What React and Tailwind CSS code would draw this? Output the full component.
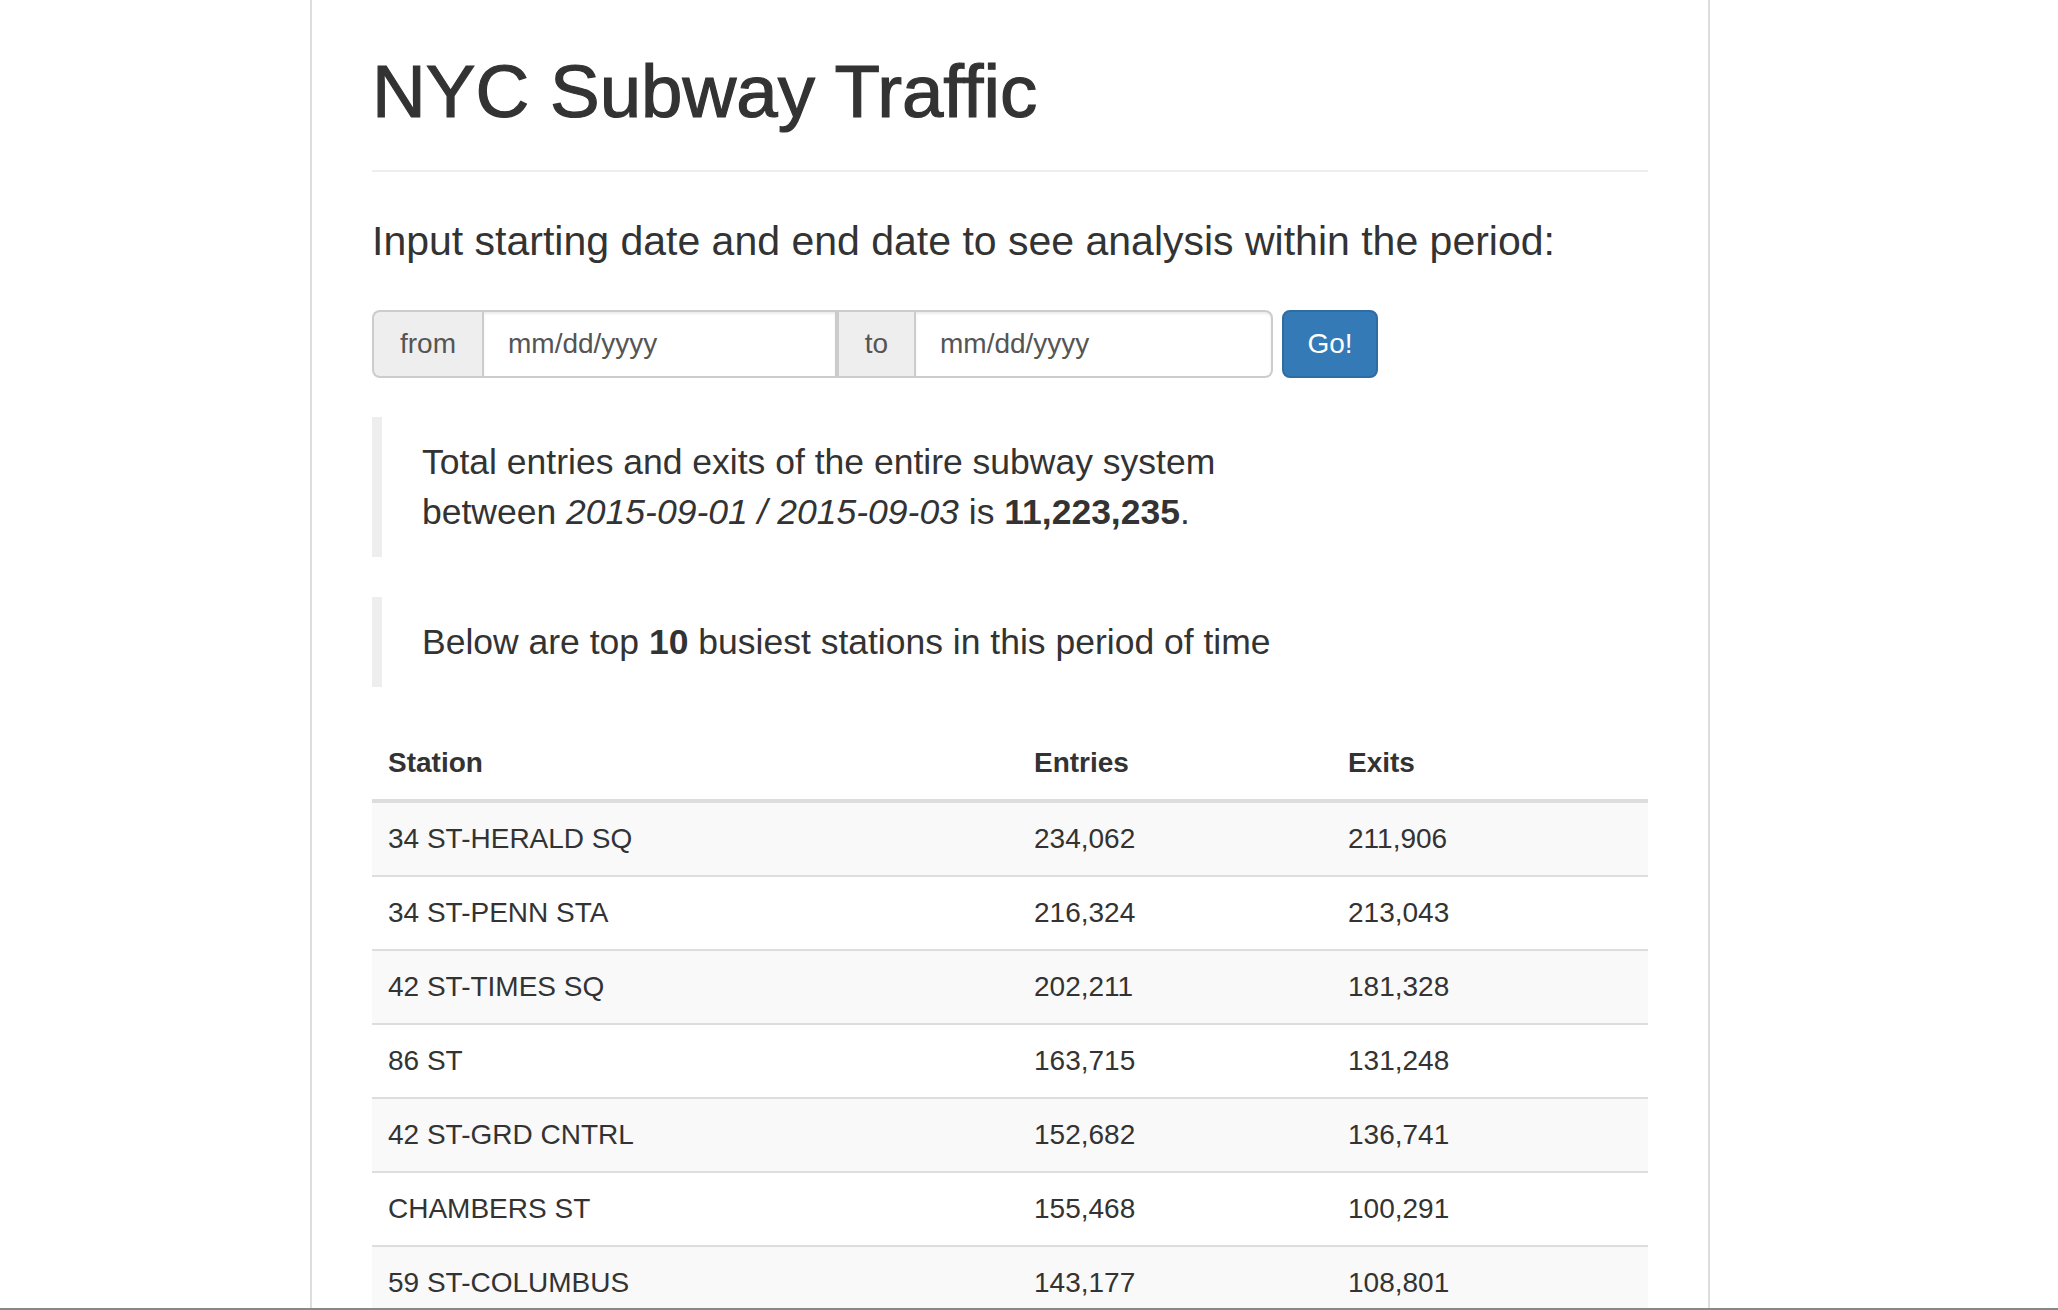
import React from "react";

const rows = [
  ["34 ST-HERALD SQ", "234,062", "211,906"],
  ["34 ST-PENN STA", "216,324", "213,043"],
  ["42 ST-TIMES SQ", "202,211", "181,328"],
  ["86 ST", "163,715", "131,248"],
  ["42 ST-GRD CNTRL", "152,682", "136,741"],
  ["CHAMBERS ST", "155,468", "100,291"],
  ["59 ST-COLUMBUS", "143,177", "108,801"],
];

export default function App() {
  return (
    <div className="h-[1310px] overflow-hidden border-b-2 border-[#888] bg-white text-[#333] font-['Liberation_Sans',Arial,sans-serif]">
      <div className="ml-[310px] w-[1400px] h-full border-x-2 border-[#ddd] px-[60px] pt-[52px]">
        <div className="pb-[18px] border-b-2 border-[#eee] mb-[40px]">
          <h1 className="text-[74.5px] leading-[79px] mb-[21px] font-normal [-webkit-text-stroke:1.2px_#333]">
            NYC Subway Traffic
          </h1>
        </div>
        <p className="text-[41px] leading-[58px] mb-[40px]">
          Input starting date and end date to see analysis within the period:
        </p>
        <div className="flex items-stretch h-[68px] mb-[39px]">
          <div className="w-[110px] flex items-center justify-center bg-[#eee] border-2 border-r-0 border-[#ccc] rounded-l-[8px] text-[28px] text-[#555]">
            from
          </div>
          <input
            type="text"
            placeholder="mm/dd/yyyy"
            className="w-[355px] border-2 border-[#ccc] px-[24px] text-[28px] text-[#555] placeholder:text-[#555] shadow-[inset_0_2px_2px_rgba(0,0,0,0.075)] outline-none"
          />
          <div className="w-[79px] flex items-center justify-center bg-[#eee] border-2 border-[#ccc] text-[28px] text-[#555]">
            to
          </div>
          <input
            type="text"
            placeholder="mm/dd/yyyy"
            className="w-[357px] border-2 border-l-0 border-[#ccc] rounded-r-[8px] px-[24px] text-[28px] text-[#555] placeholder:text-[#555] shadow-[inset_0_2px_2px_rgba(0,0,0,0.075)] outline-none"
          />
          <button className="ml-[9px] w-[96px] bg-[#337ab7] border-2 border-[#2e6da4] rounded-[8px] text-white text-[28px] flex items-center justify-center">
            Go!
          </button>
        </div>
        <blockquote className="border-l-[10px] border-[#eee] py-[20px] px-[40px] text-[35.5px] leading-[50px] mb-[40px]">
          Total entries and exits of the entire subway system
          <br />
          between <em>2015-09-01 / 2015-09-03</em> is <strong>11,223,235</strong>.
        </blockquote>
        <blockquote className="border-l-[10px] border-[#eee] py-[20px] px-[40px] text-[35.5px] leading-[50px] mb-[40px]">
          Below are top <strong>10</strong> busiest stations in this period of time
        </blockquote>
        <table className="w-full table-fixed border-separate border-spacing-0 text-[28px] leading-[40px]">
          <colgroup>
            <col className="w-[646px]" />
            <col className="w-[314px]" />
            <col />
          </colgroup>
          <thead>
            <tr>
              <th className="text-left font-bold p-[16px] border-b-4 border-[#ddd]">Station</th>
              <th className="text-left font-bold p-[16px] border-b-4 border-[#ddd]">Entries</th>
              <th className="text-left font-bold p-[16px] border-b-4 border-[#ddd]">Exits</th>
            </tr>
          </thead>
          <tbody>
            {rows.map((r, i) => (
              <tr key={i} className={i % 2 === 0 ? "bg-[#f9f9f9]" : "bg-white"}>
                {r.map((c, j) => (
                  <td
                    key={j}
                    className={i === 0 ? "p-[16px]" : "p-[16px] border-t-2 border-[#ddd]"}
                  >
                    {c}
                  </td>
                ))}
              </tr>
            ))}
          </tbody>
        </table>
      </div>
    </div>
  );
}
